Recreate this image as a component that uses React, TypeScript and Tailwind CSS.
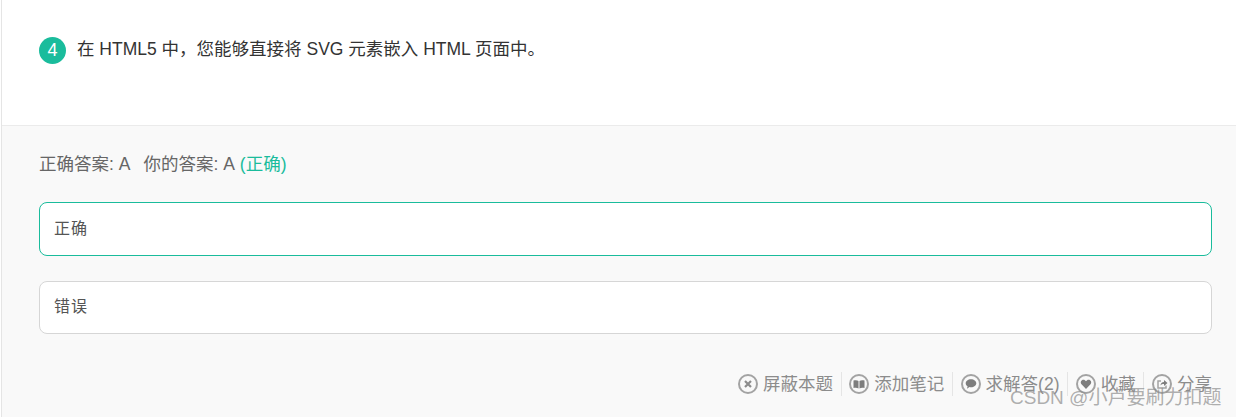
const FONT = "font-['Liberation_Sans','Noto_Sans_CJK_SC',sans-serif]";

function CloseIcon() {
  return (
    <svg width="20" height="20" viewBox="0 0 20 20" fill="none">
      <circle cx="10" cy="10" r="9" stroke="#a3a3a3" strokeWidth="2" />
      <path d="M7 7l6 6M13 7l-6 6" stroke="#8c8c8c" strokeWidth="2.2" />
    </svg>
  );
}

function BookIcon() {
  return (
    <svg width="20" height="20" viewBox="0 0 20 20" fill="none">
      <circle cx="10" cy="10" r="9" stroke="#a3a3a3" strokeWidth="2" />
      <path d="M4.500 6.500c2-.6 4-.4 5 .5v7.500c-1-.8-3-1-5-.5zM15.500 6.500c-2-.6-4-.4-5 .5v7.500c1-.8 3-1 5-.5z" fill="#7d7d7d" />
    </svg>
  );
}

function ChatIcon() {
  return (
    <svg width="20" height="20" viewBox="0 0 20 20" fill="none">
      <circle cx="10" cy="10" r="9" stroke="#a3a3a3" strokeWidth="2" />
      <path d="M10 5.200c3 0 5.300 1.700 5.300 4s-2.300 4-5.300 4c-.6 0-1.100 0-1.600-.2L6 14.800l.6-2.600c-1.200-.7-1.900-1.800-1.900-3 0-2.300 2.300-4 5.300-4z" fill="#7d7d7d" />
    </svg>
  );
}

function HeartIcon() {
  return (
    <svg width="20" height="20" viewBox="0 0 20 20" fill="none">
      <circle cx="10" cy="10" r="9" stroke="#a3a3a3" strokeWidth="2" />
      <path d="M10 15L5.500 10.300C3.900 8.500 5.200 5.800 7.400 5.800c1.100 0 2 .6 2.600 1.500.6-.9 1.500-1.500 2.600-1.500 2.200 0 3.500 2.700 1.900 4.500z" fill="#7d7d7d" />
    </svg>
  );
}

function ShareIcon() {
  return (
    <svg width="20" height="20" viewBox="0 0 20 20" fill="none">
      <circle cx="10" cy="10" r="9" stroke="#a3a3a3" strokeWidth="2" />
      <path d="M14 11.500V14H6V7h3" stroke="#a3a3a3" strokeWidth="1.500" />
      <path d="M8.500 11.500c0-2.200 1.500-3.500 3.500-3.500V6l3.500 3-3.500 3v-2c-1.500 0-2.700.4-3.500 1.500z" fill="#7d7d7d" />
    </svg>
  );
}

const ACTIONS = [
  { label: "屏蔽本题", icon: <CloseIcon /> },
  { label: "添加笔记", icon: <BookIcon /> },
  { label: "求解答(2)", icon: <ChatIcon /> },
  { label: "收藏", icon: <HeartIcon /> },
  { label: "分享", icon: <ShareIcon /> },
];

export default function App() {
  return (
    <div className={`relative h-[417px] w-[1236px] overflow-hidden bg-white pl-px ${FONT}`}>
      <div className="h-full border-l border-[#e5e5e5]">
        {/* Question */}
        <div className="flex h-[125px] items-start pl-[37px] pt-[37px]">
          <span className="flex h-[27px] w-[27px] items-center justify-center rounded-full bg-[#1abc9c] text-[18px] text-white">
            4
          </span>
          <p className="ml-[11px] text-[17.5px] leading-[25px] text-[#333]">
            在 HTML5 中，您能够直接将 SVG 元素嵌入 HTML 页面中。
          </p>
        </div>

        {/* Answer area */}
        <div className="h-[292px] border-t border-[#ebebeb] bg-[#f9f9f9] pl-[37px] pr-[24px] pt-[26px]">
          <div className="flex text-[17.5px] leading-[24px] text-[#666]">
            <span>正确答案: A</span>
            <span className="ml-[13px]">你的答案: A</span>
            <span className="ml-[5px] text-[#1abc9c]">(正确)</span>
          </div>

          <div className="mt-[26px] flex h-[54px] items-center rounded-lg border border-[#1abc9c] bg-white px-[14px] pb-[1px] text-[16px] tracking-[1px] text-[#555]">
            正确
          </div>
          <div className="mt-[25px] flex h-[53px] items-center rounded-lg border border-[#d6d6d6] bg-white px-[14px] pb-[2px] text-[16px] tracking-[1px] text-[#555]">
            错误
          </div>

          <div className="mt-[38px] flex justify-end text-[#8c8c8c]">
            {ACTIONS.map((action, i) => (
              <div
                key={action.label}
                className={`flex h-[24px] items-center gap-[5px] text-[17.5px] ${i > 0 ? "ml-[7.5px] border-l border-[#e5e5e5] pl-[7.75px]" : ""}`}
              >
                {action.icon}
                <span>{action.label}</span>
              </div>
            ))}
          </div>
        </div>
      </div>

      {/* Watermark */}
      <span className="absolute left-[1010px] top-[386px] text-[19px] leading-[24px] text-[#8c8c8c]/70">
        CSDN @小卢要刷力扣题
      </span>
    </div>
  );
}
